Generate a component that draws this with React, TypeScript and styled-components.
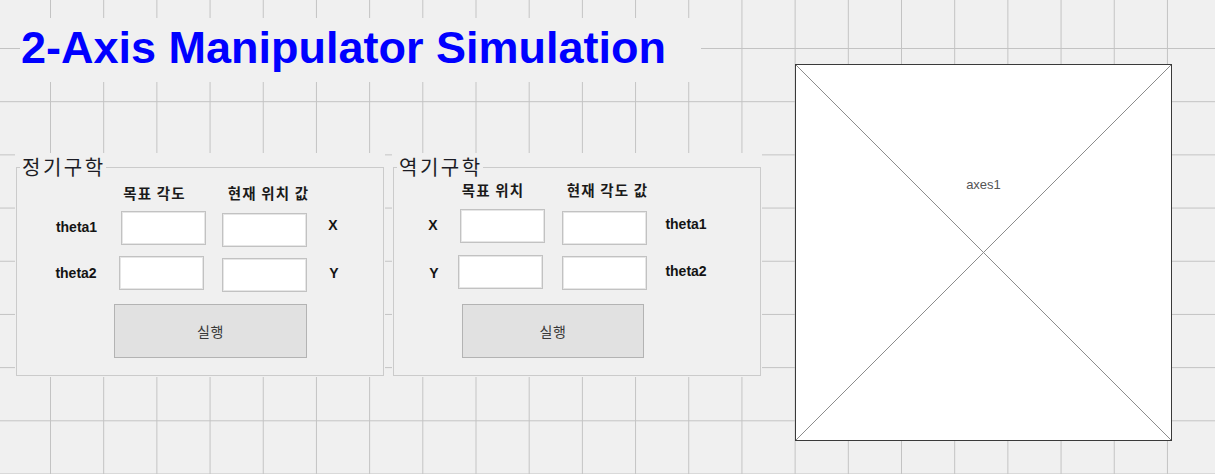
import React from 'react';
import styled, { createGlobalStyle } from 'styled-components';

const GlobalStyle = createGlobalStyle`
  html, body { margin: 0; padding: 0; background: #f0f0f0; }
  * { box-sizing: border-box; }
`;

const KR = `"Noto Sans CJK KR", "Noto Sans", sans-serif`;
const SANS = `"Liberation Sans", Arial, sans-serif`;

const Canvas = styled.div`
  position: relative;
  width: 1215px;
  height: 474px;
  overflow: hidden;
  display: flex;
  align-items: flex-start;
  padding-left: 15px;
  background-color: #f0f0f0;
  background-image: linear-gradient(to right, #c3c3c3 1px, transparent 1px),
    linear-gradient(to bottom, #c3c3c3 1px, transparent 1px);
  background-size: 53.19px 53.19px;
  background-position: 50px 48px;
`;

const LeftColumn = styled.div`
  display: flex;
  flex-direction: column;
  width: 747px;
`;

const TitleBlock = styled.h1`
  margin: 18px 0 0 5px;
  width: 681px;
  height: 64px;
  padding-left: 1px;
  background: #f0f0f0;
  font-family: ${SANS};
  font-weight: 700;
  font-size: 45px;
  line-height: 60px;
  color: #0000ff;
  white-space: nowrap;
`;

const PanelRow = styled.div`
  display: flex;
  gap: 7px;
  margin-top: 71px;
`;

const Panel = styled.section`
  position: relative;
  width: 370px;
  height: 224px;
  padding: 14px 1px 1px 1px;
  background: #f0f0f0;
`;

const PanelTitle = styled.span`
  position: absolute;
  left: 5px;
  top: 0;
  padding: 0 0 0 2px;
  background: #f0f0f0;
  font-family: ${KR};
  font-size: 20px;
  letter-spacing: 2.5px;
  line-height: 28px;
  color: #1c1c24;
`;

const Frame = styled.div<{ $cols: string }>`
  height: 209px;
  border: 1px solid #cbcbcb;
  display: grid;
  grid-template-columns: ${(p) => p.$cols};
  grid-template-rows: 24px 45px 50px 58px;
  padding-top: 13px;
  align-items: start;
  justify-items: start;
`;

type Place = { $col: string; $row: number; $ml?: number; $mt?: number };

const Header = styled.div<Place>`
  grid-column: ${(p) => p.$col};
  grid-row: ${(p) => p.$row};
  margin-left: ${(p) => p.$ml ?? 0}px;
  margin-top: ${(p) => p.$mt ?? 0}px;
  width: 100px;
  text-align: center;
  font-family: ${KR};
  font-weight: 700;
  font-size: 14.5px;
  letter-spacing: 1.2px;
  line-height: 24px;
  color: #1a1a1a;
  white-space: nowrap;
`;

const Label = styled.div<Place & { $w?: number }>`
  grid-column: ${(p) => p.$col};
  grid-row: ${(p) => p.$row};
  margin-left: ${(p) => p.$ml ?? 0}px;
  margin-top: ${(p) => p.$mt ?? 0}px;
  width: ${(p) => p.$w ?? 60}px;
  text-align: center;
  font-family: ${SANS};
  font-weight: 700;
  font-size: 14px;
  line-height: 18px;
  color: #141414;
`;

const TextBox = styled.div<Place>`
  grid-column: ${(p) => p.$col};
  grid-row: ${(p) => p.$row};
  margin-left: ${(p) => p.$ml ?? 0}px;
  margin-top: ${(p) => p.$mt ?? 0}px;
  width: 85px;
  height: 34px;
  background: #ffffff;
  border: 1px solid #c2c2c2;
  box-shadow: inset 0 0 0 1px #e6e6e6;
`;

const RunButton = styled.div<Place & { $w: number }>`
  grid-column: ${(p) => p.$col};
  grid-row: ${(p) => p.$row};
  margin-left: ${(p) => p.$ml ?? 0}px;
  margin-top: ${(p) => p.$mt ?? 0}px;
  width: ${(p) => p.$w}px;
  height: 54px;
  display: flex;
  align-items: center;
  justify-content: center;
  background: #e1e1e1;
  border: 1px solid #b3b3b3;
  font-family: ${KR};
  font-size: 14px;
  letter-spacing: 0.5px;
  color: #383838;
`;

const Axes = styled.div`
  position: relative;
  margin: 64px 0 0 33px;
  width: 377px;
  height: 377px;
  background: #ffffff;
  border: 1px solid #3a3a3a;
  padding-top: 111px;
`;

const Cross = styled.svg`
  position: absolute;
  inset: 0;
  width: 100%;
  height: 100%;
`;

const AxesName = styled.div`
  position: relative;
  text-align: center;
  font-family: ${SANS};
  font-size: 13px;
  line-height: 18px;
  color: #555555;
`;

export default function App() {
  return (
    <>
      <GlobalStyle />
      <Canvas>
        <LeftColumn>
          <TitleBlock>2-Axis Manipulator Simulation</TitleBlock>
          <PanelRow>
            <Panel>
              <PanelTitle>정기구학</PanelTitle>
              <Frame $cols="97px 108px 96px 1fr">
                <Header $col="2" $row={1} $ml={-9.5}>목표 각도</Header>
                <Header $col="3" $row={1} $ml={-3.5}>현재 위치 값</Header>

                <Label $col="1" $row={2} $ml={29.5} $mt={12.5}>theta1</Label>
                <TextBox $col="2" $row={2} $ml={6.7} $mt={6} />
                <TextBox $col="3" $row={2} $ml={0} $mt={7.7} />
                <Label $col="4" $row={2} $w={30} $ml={0} $mt={11}>X</Label>

                <Label $col="1" $row={3} $ml={29} $mt={14}>theta2</Label>
                <TextBox $col="2" $row={3} $ml={5} $mt={6} />
                <TextBox $col="3" $row={3} $ml={0} $mt={8} />
                <Label $col="4" $row={3} $w={30} $ml={1} $mt={14}>Y</Label>

                <RunButton $col="2 / span 2" $row={4} $ml={0} $mt={4} $w={193}>실행</RunButton>
              </Frame>
            </Panel>
            <Panel>
              <PanelTitle>역기구학</PanelTitle>
              <Frame $cols="64px 104px 98px 1fr">
                <Header $col="2" $row={1} $ml={-15} $mt={-3}>목표 위치</Header>
                <Header $col="3" $row={1} $ml={-4.5} $mt={-3}>현재 각도 값</Header>

                <Label $col="1" $row={2} $w={30} $ml={24} $mt={11}>X</Label>
                <TextBox $col="2" $row={2} $ml={2} $mt={4} />
                <TextBox $col="3" $row={2} $ml={0} $mt={6} />
                <Label $col="4" $row={2} $ml={-4} $mt={10}>theta1</Label>

                <Label $col="1" $row={3} $w={30} $ml={25} $mt={14}>Y</Label>
                <TextBox $col="2" $row={3} $ml={0} $mt={5} />
                <TextBox $col="3" $row={3} $ml={0} $mt={6} />
                <Label $col="4" $row={3} $ml={-4} $mt={11.7}>theta2</Label>

                <RunButton $col="2 / span 2" $row={4} $ml={4} $mt={4} $w={182}>실행</RunButton>
              </Frame>
            </Panel>
          </PanelRow>
        </LeftColumn>
        <Axes>
          <Cross viewBox="0 0 375 375" preserveAspectRatio="none">
            <line x1="0" y1="0" x2="375" y2="375" stroke="#8c8c8c" strokeWidth="1" />
            <line x1="375" y1="0" x2="0" y2="375" stroke="#8c8c8c" strokeWidth="1" />
          </Cross>
          <AxesName>axes1</AxesName>
        </Axes>
      </Canvas>
    </>
  );
}
